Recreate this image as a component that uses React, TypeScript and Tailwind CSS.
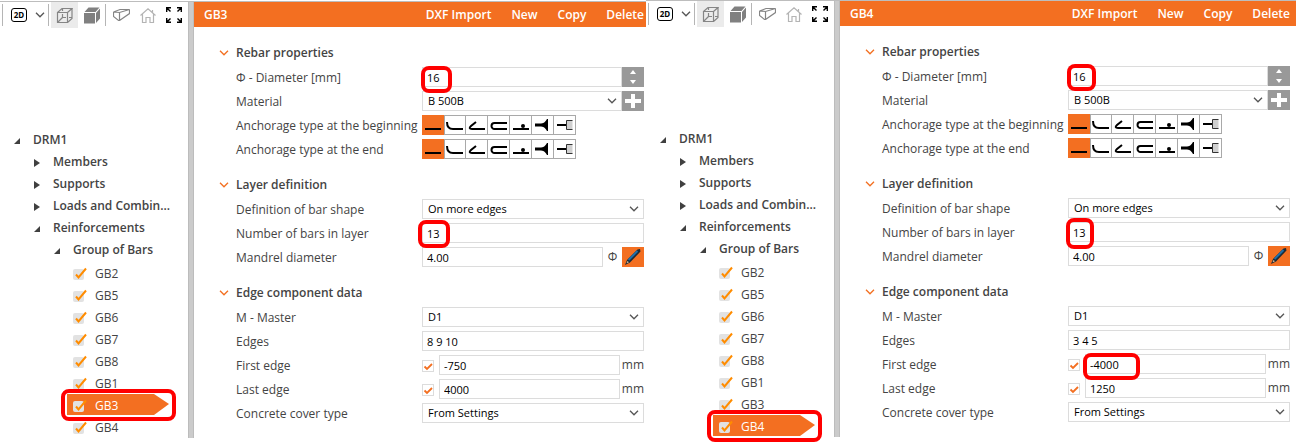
import { ReactNode, useState } from "react";

type GroupData = {
    id: string;
    name: string;
    edges: string;
    firstEdge: string;
    lastEdge: string;
    markFirstEdge: boolean;
    panelPadding: string;
    diameterMark: string;
    barsMark: string;
};

const groups: GroupData[] = [
    {
        id: "a", name: "GB3", edges: "8 9 10", firstEdge: "-750", lastEdge: "4000", markFirstEdge: false,
        panelPadding: "pr-[2px]",
        diameterMark: "-left-px -top-px w-[31px] h-[27px]",
        barsMark: "-left-1 -top-[3px] w-8 h-7",
    },
    {
        id: "b", name: "GB4", edges: "3 4 5", firstEdge: "-4000", lastEdge: "1250", markFirstEdge: true,
        panelPadding: "pr-[6px]",
        diameterMark: "-left-px -top-[2px] w-[29px] h-[27px]",
        barsMark: "-left-[2px] -top-1 w-7 h-[31px]",
    },
];

const branches = [
    { label: "DRM1", open: true, indent: "pl-[14px]" },
    { label: "Members", open: false, indent: "pl-[34px]" },
    { label: "Supports", open: false, indent: "pl-[34px]" },
    { label: "Loads and Combin...", open: false, indent: "pl-[34px]" },
    { label: "Reinforcements", open: true, indent: "pl-[34px]" },
    { label: "Group of Bars", open: true, indent: "pl-[54px]" },
];

const bars = ["GB2", "GB5", "GB6", "GB7", "GB8", "GB1", "GB3", "GB4"];

const Highlight = ({ place }: { place: string }) => (
    <span className={`absolute z-10 border-4 border-[#ff0000] rounded-lg pointer-events-none ${place}`}></span>
);

const Chevron = ({ className }: { className: string }) => (
    <svg viewBox="0 0 10 6" className={`w-[10px] h-[6px] ${className}`} fill="none" stroke="currentColor">
        <path d="M1 0.8L5 4.8L9 0.8" strokeWidth="1.3" />
    </svg>
);

/* ---------- toolbar ---------- */

const Separator = () => <span className="w-px h-[22px] bg-[#b5b5b5]"></span>;

function Toolbar() {
    return (
        <div className="flex items-center h-[26px] pl-[2px]">
            <Separator />
            <button aria-label="2D view" className="w-8 h-full flex items-center justify-center">
                <span className="w-4 h-[14px] border border-black rounded-[3px] text-[8px] leading-3 font-bold text-black text-center">2D</span>
            </button>
            <button aria-label="More views" className="w-[10px] mr-[3px] h-full flex items-center justify-center text-[#555]">
                <Chevron className="shrink-0" />
            </button>
            <Separator />
            <button aria-label="Wireframe" className="ml-[2px] w-[27px] h-full bg-[#ebebeb] flex items-center justify-center">
                <svg viewBox="0 0 17 17" className="w-[17px] h-[17px]" fill="none" stroke="#858585">
                    <path d="M1.5 5.5H11.5V15.5H1.5zM1.5 5.5L6 1.5H16L11.5 5.5M16 1.5V11.5L11.5 15.5M6.5 1.5V4M6.5 7V10.5H10M13 10.5H16M1.5 15.5L6.5 10.5" strokeWidth="1.2" />
                </svg>
            </button>
            <button aria-label="Solid" className="w-[27px] h-full flex items-center justify-center">
                <svg viewBox="0 0 17 17" className="w-[17px] h-[17px]" fill="#808080">
                    <path d="M1 6H12V16.5H1zM1.5 5L5.5 0.5H16.5L12.5 5zM13 6L17 1.5V11.5L13 16z" />
                </svg>
            </button>
            <Separator />
            <button aria-label="Beam" className="ml-px w-7 h-full flex items-center justify-center">
                <svg viewBox="0 0 17 14" className="w-[17px] h-[14px]" fill="none" stroke="#858585">
                    <path d="M0.5 4L7 1.5H16.5L6.5 4.5zM0.5 4V8.5L5.5 12.5H6.5V4.5M6.5 12.5L16.5 5.5V1.5" strokeWidth="1.2" />
                </svg>
            </button>
            <button aria-label="Home" className="w-[25px] h-full flex items-center justify-center">
                <svg viewBox="0 0 16 15" className="w-4 h-[15px]" fill="none" stroke="#b4b4b4">
                    <path d="M0.5 7.5L8 0.8L15.5 7.5M2.5 6V14.5H6V9.5H10V14.5H13.5V6M12.5 4.5V2" strokeWidth="1.2" />
                </svg>
            </button>
            <button aria-label="Fit to window" className="w-7 h-full flex items-center justify-center">
                <svg viewBox="0 0 16 16" className="w-4 h-4" fill="none" stroke="#000">
                    <path d="M0.7 5V0.7H5M0.7 0.7L4.5 4.5M11 0.7H15.3V5M15.3 0.7L11.5 4.5M0.7 11V15.3H5M0.7 15.3L4.5 11.5M11 15.3H15.3V11M15.3 15.3L11.5 11.5" strokeWidth="1.4" />
                </svg>
            </button>
        </div>
    );
}

/* ---------- tree ---------- */

const TreeArrow = ({ open }: { open: boolean }) => (
    <svg viewBox="0 0 7 8" className="w-[7px] h-2 shrink-0 mt-[2px]" fill="#404040">
        <path d={open ? "M6 1V7H0z" : "M0 0L6 4L0 8z"} />
    </svg>
);

function TreeLeaf({ groupId, label, selected }: { groupId: string, label: string, selected: boolean }) {
    const [checked, setChecked] = useState(true);

    return (
        <li className="relative h-[22px] pl-[67px]">
            {selected && <Highlight place="left-[61px] -top-1 w-[115px] h-8" />}
            <label
                htmlFor={`${groupId}-${label}`}
                className={`flex items-center w-[102px] h-[22px] pt-[3px] pl-[6px] ${selected ? "bg-[#f36f21] text-white [clip-path:polygon(0_1px,87px_1px,100%_11px,87px_100%,0_100%)]" : ""}`}
            >
                <span className="grid w-[14px] h-[14px] mr-2">
                    <input
                        id={`${groupId}-${label}`}
                        type="checkbox"
                        checked={checked}
                        onChange={() => setChecked(!checked)}
                        className="appearance-none col-start-1 row-start-1 w-[11px] h-[11px] mt-[2px] bg-[#e2e2e2] rounded-xs"
                    />
                    {checked && (
                        <svg viewBox="0 0 14 14" className="col-start-1 row-start-1 w-[14px] h-[14px] pointer-events-none" fill="none" stroke="#ff8c00">
                            <path d="M3 7.5L5.5 10.5L13 1.5" strokeWidth="2" />
                        </svg>
                    )}
                </span>
                {label}
            </label>
        </li>
    );
}

function Tree({ group }: { group: GroupData }) {
    return (
        <ul className="mt-[101px] pb-px">
            {branches.map(branch => (
                <li key={branch.label} className={`flex items-center h-[22px] font-semibold whitespace-nowrap ${branch.indent}`}>
                    <TreeArrow open={branch.open} />
                    <span className="ml-3">{branch.label}</span>
                </li>
            ))}
            {bars.map(bar => (
                <TreeLeaf key={bar} groupId={group.id} label={bar} selected={bar === group.name} />
            ))}
        </ul>
    );
}

/* ---------- properties ---------- */

const fieldStyle = "w-full h-5 bg-white border border-[#dcdcdc] text-[11px] text-black";

const TextField = ({ id, value }: { id: string, value: string }) => (
    <input id={id} type="text" defaultValue={value} className={`${fieldStyle} min-w-0 px-1`} />
);

const SelectField = ({ id, value }: { id: string, value: string }) => (
    <div className="relative w-full">
        <select id={id} className={`${fieldStyle} block appearance-none pl-[5px] pr-5`}>
            <option>{value}</option>
        </select>
        <Chevron className="absolute right-[5px] top-[7px] text-[#555] pointer-events-none" />
    </div>
);

const anchorageTypes: { name: string, icon: ReactNode }[] = [
    { name: "Straight", icon: <path d="M3 14H19" /> },
    { name: "Bend", icon: <path d="M3 7C3 11 5 14 9 14H19" /> },
    { name: "Hook", icon: <path d="M10 7L5 11Q2 14 6 14H19" /> },
    { name: "Loop", icon: <path d="M19 8H6.5a3 3 0 0 0 0 6H19" /> },
    { name: "Welded transverse bar", icon: <><path d="M3 14H19" /><circle cx="13" cy="11" r="2" fill="#000" stroke="none" /></> },
    { name: "Head", icon: <><path d="M3 10H12" strokeWidth="3" /><path d="M9 9Q13 8 15 4H16V16H15Q13 12 9 11z" fill="#000" stroke="none" /></> },
    { name: "Plate", icon: <><path d="M3 10H12" /><path d="M18.5 5.5H12.5V14.5H18.5" fill="#d0d0d0" stroke="#333" strokeWidth="1" /></> },
];

function AnchorageField({ label }: { label: string }) {
    const [active, setActive] = useState(0);

    return (
        <div role="group" aria-label={label} className="flex">
            {anchorageTypes.map((type, i) => (
                <button
                    key={type.name}
                    type="button"
                    aria-label={type.name}
                    aria-pressed={active === i}
                    onClick={() => setActive(i)}
                    className={`w-[22px] h-5 flex items-center justify-center ${active === i ? "bg-[#f36f21]" : "bg-white border-y border-r border-[#a9a9a9]"} ${i === 1 ? "border-l" : ""}`}
                >
                    <svg viewBox="0 0 22 20" className="w-[22px] h-5 shrink-0" fill="none" stroke="#000" strokeWidth="2">{type.icon}</svg>
                </button>
            ))}
        </div>
    );
}

function Row({ id, label, children }: { id?: string, label: string, children: ReactNode }) {
    return (
        <div className="flex items-center h-6">
            {id
                ? <label htmlFor={id} className="w-[186px] shrink-0 pt-px">{label}</label>
                : <span className="w-[186px] shrink-0 pt-px">{label}</span>}
            <div className="flex-1 relative flex items-center min-w-0">{children}</div>
        </div>
    );
}

function Section({ title, children }: { title: string, children: ReactNode }) {
    return (
        <section className="mb-3 pl-[42px]">
            <h2 className="flex items-center h-6 -ml-[17px] font-semibold">
                <Chevron className="mr-[7px] text-[#f36f21]" />
                {title}
            </h2>
            {children}
        </section>
    );
}

function EdgeField({ id, label, value, marked }: { id: string, label: string, value: string, marked: boolean }) {
    const [checked, setChecked] = useState(true);

    return (
        <>
            <span className="grid w-3 h-3 mr-[5px] mt-[2px] shrink-0">
                <input
                    type="checkbox"
                    aria-label={`Use ${label}`}
                    checked={checked}
                    onChange={() => setChecked(!checked)}
                    className="appearance-none col-start-1 row-start-1 w-3 h-3 border border-[#dcdcdc] bg-white"
                />
                {checked && (
                    <svg viewBox="0 0 12 12" className="col-start-1 row-start-1 w-3 h-3 pointer-events-none" fill="none" stroke="#f36f21">
                        <path d="M2.5 6.5L5 9L10 4" strokeWidth="1.8" />
                    </svg>
                )}
            </span>
            <div className="relative flex flex-1 min-w-0">
                {marked && <Highlight place="-left-[2px] -top-px w-[57px] h-[27px]" />}
                <TextField id={id} value={value} />
            </div>
            <span className="w-6 shrink-0 text-right">mm</span>
        </>
    );
}

function Properties({ group }: { group: GroupData }) {
    return (
        <main className="flex-1 min-w-0">
            <header className={`flex items-center justify-between h-[25px] pl-[10px] bg-[#f36f21] text-white font-semibold ${group.panelPadding}`}>
                <h1>{group.name}</h1>
                <div className="flex gap-5">
                    <button>DXF Import</button>
                    <button>New</button>
                    <button>Copy</button>
                    <button>Delete</button>
                </div>
            </header>
            <form className={`pt-[14px] ${group.panelPadding}`} onSubmit={event => event.preventDefault()}>
                <Section title="Rebar properties">
                    <Row id={`${group.id}-diameter`} label="Φ - Diameter [mm]">
                        <Highlight place={group.diameterMark} />
                        <TextField id={`${group.id}-diameter`} value="16" />
                        <button type="button" aria-label="Step diameter" className="w-[22px] h-5 shrink-0 bg-[#999] flex items-center justify-center">
                            <svg viewBox="0 0 22 20" className="w-[22px] h-5" fill="#fff">
                                <path d="M8 7L11 3L14 7zM8 13L11 17L14 13z" />
                            </svg>
                        </button>
                    </Row>
                    <Row id={`${group.id}-material`} label="Material">
                        <SelectField id={`${group.id}-material`} value="B 500B" />
                        <button type="button" aria-label="Add material" className="w-[22px] h-5 shrink-0 bg-[#999] flex items-center justify-center">
                            <svg viewBox="0 0 22 20" className="w-[22px] h-5" stroke="#fff" strokeWidth="4">
                                <path d="M3 10H19M11 3V17" />
                            </svg>
                        </button>
                    </Row>
                    <Row label="Anchorage type at the beginning">
                        <AnchorageField label="Anchorage type at the beginning" />
                    </Row>
                    <Row label="Anchorage type at the end">
                        <AnchorageField label="Anchorage type at the end" />
                    </Row>
                </Section>
                <Section title="Layer definition">
                    <Row id={`${group.id}-shape`} label="Definition of bar shape">
                        <SelectField id={`${group.id}-shape`} value="On more edges" />
                    </Row>
                    <Row id={`${group.id}-bars`} label="Number of bars in layer">
                        <Highlight place={group.barsMark} />
                        <TextField id={`${group.id}-bars`} value="13" />
                    </Row>
                    <Row id={`${group.id}-mandrel`} label="Mandrel diameter">
                        <TextField id={`${group.id}-mandrel`} value="4.00" />
                        <span className="w-[19px] shrink-0 text-center">Φ</span>
                        <button type="button" aria-label="Edit mandrel diameter" className="w-[22px] h-5 shrink-0 bg-[#f36f21]">
                            <svg viewBox="0 0 22 20" className="w-[22px] h-5">
                                <path d="M3 18L5 13L15.5 2.5L18 2L18.5 4.5L8 15.5z" fill="#1b2a36" />
                                <path d="M6.5 13L15.5 4" stroke="#1f6ea8" strokeWidth="2" />
                                <path d="M4.5 16.2L5.5 14L7 15.2z" fill="#e8c9a0" />
                            </svg>
                        </button>
                    </Row>
                </Section>
                <Section title="Edge component data">
                    <Row id={`${group.id}-master`} label="M - Master">
                        <SelectField id={`${group.id}-master`} value="D1" />
                    </Row>
                    <Row id={`${group.id}-edges`} label="Edges">
                        <TextField id={`${group.id}-edges`} value={group.edges} />
                    </Row>
                    <Row id={`${group.id}-first`} label="First edge">
                        <EdgeField id={`${group.id}-first`} label="first edge" value={group.firstEdge} marked={group.markFirstEdge} />
                    </Row>
                    <Row id={`${group.id}-last`} label="Last edge">
                        <EdgeField id={`${group.id}-last`} label="last edge" value={group.lastEdge} marked={false} />
                    </Row>
                    <Row id={`${group.id}-cover`} label="Concrete cover type">
                        <SelectField id={`${group.id}-cover`} value="From Settings" />
                    </Row>
                </Section>
            </form>
        </main>
    );
}

function App() {
    return (
        <div className="min-h-screen grid grid-cols-[646fr_650fr] items-start bg-white text-[12px] leading-4 text-[#444] font-['Open_Sans','Noto_Sans',sans-serif]">
            {groups.map((group, i) => (
                <div key={group.id} className={`flex min-w-0 border-t border-[#bdbdbd] ${i === 0 ? "mt-px" : ""}`}>
                    <aside className="w-[188px] shrink-0">
                        <Toolbar />
                        <Tree group={group} />
                    </aside>
                    <div className="w-[6px] shrink-0 bg-[#cbcbcb] border-x border-[#bcbcbc]"></div>
                    <Properties group={group} />
                </div>
            ))}
        </div>
    );
}

export default App;
